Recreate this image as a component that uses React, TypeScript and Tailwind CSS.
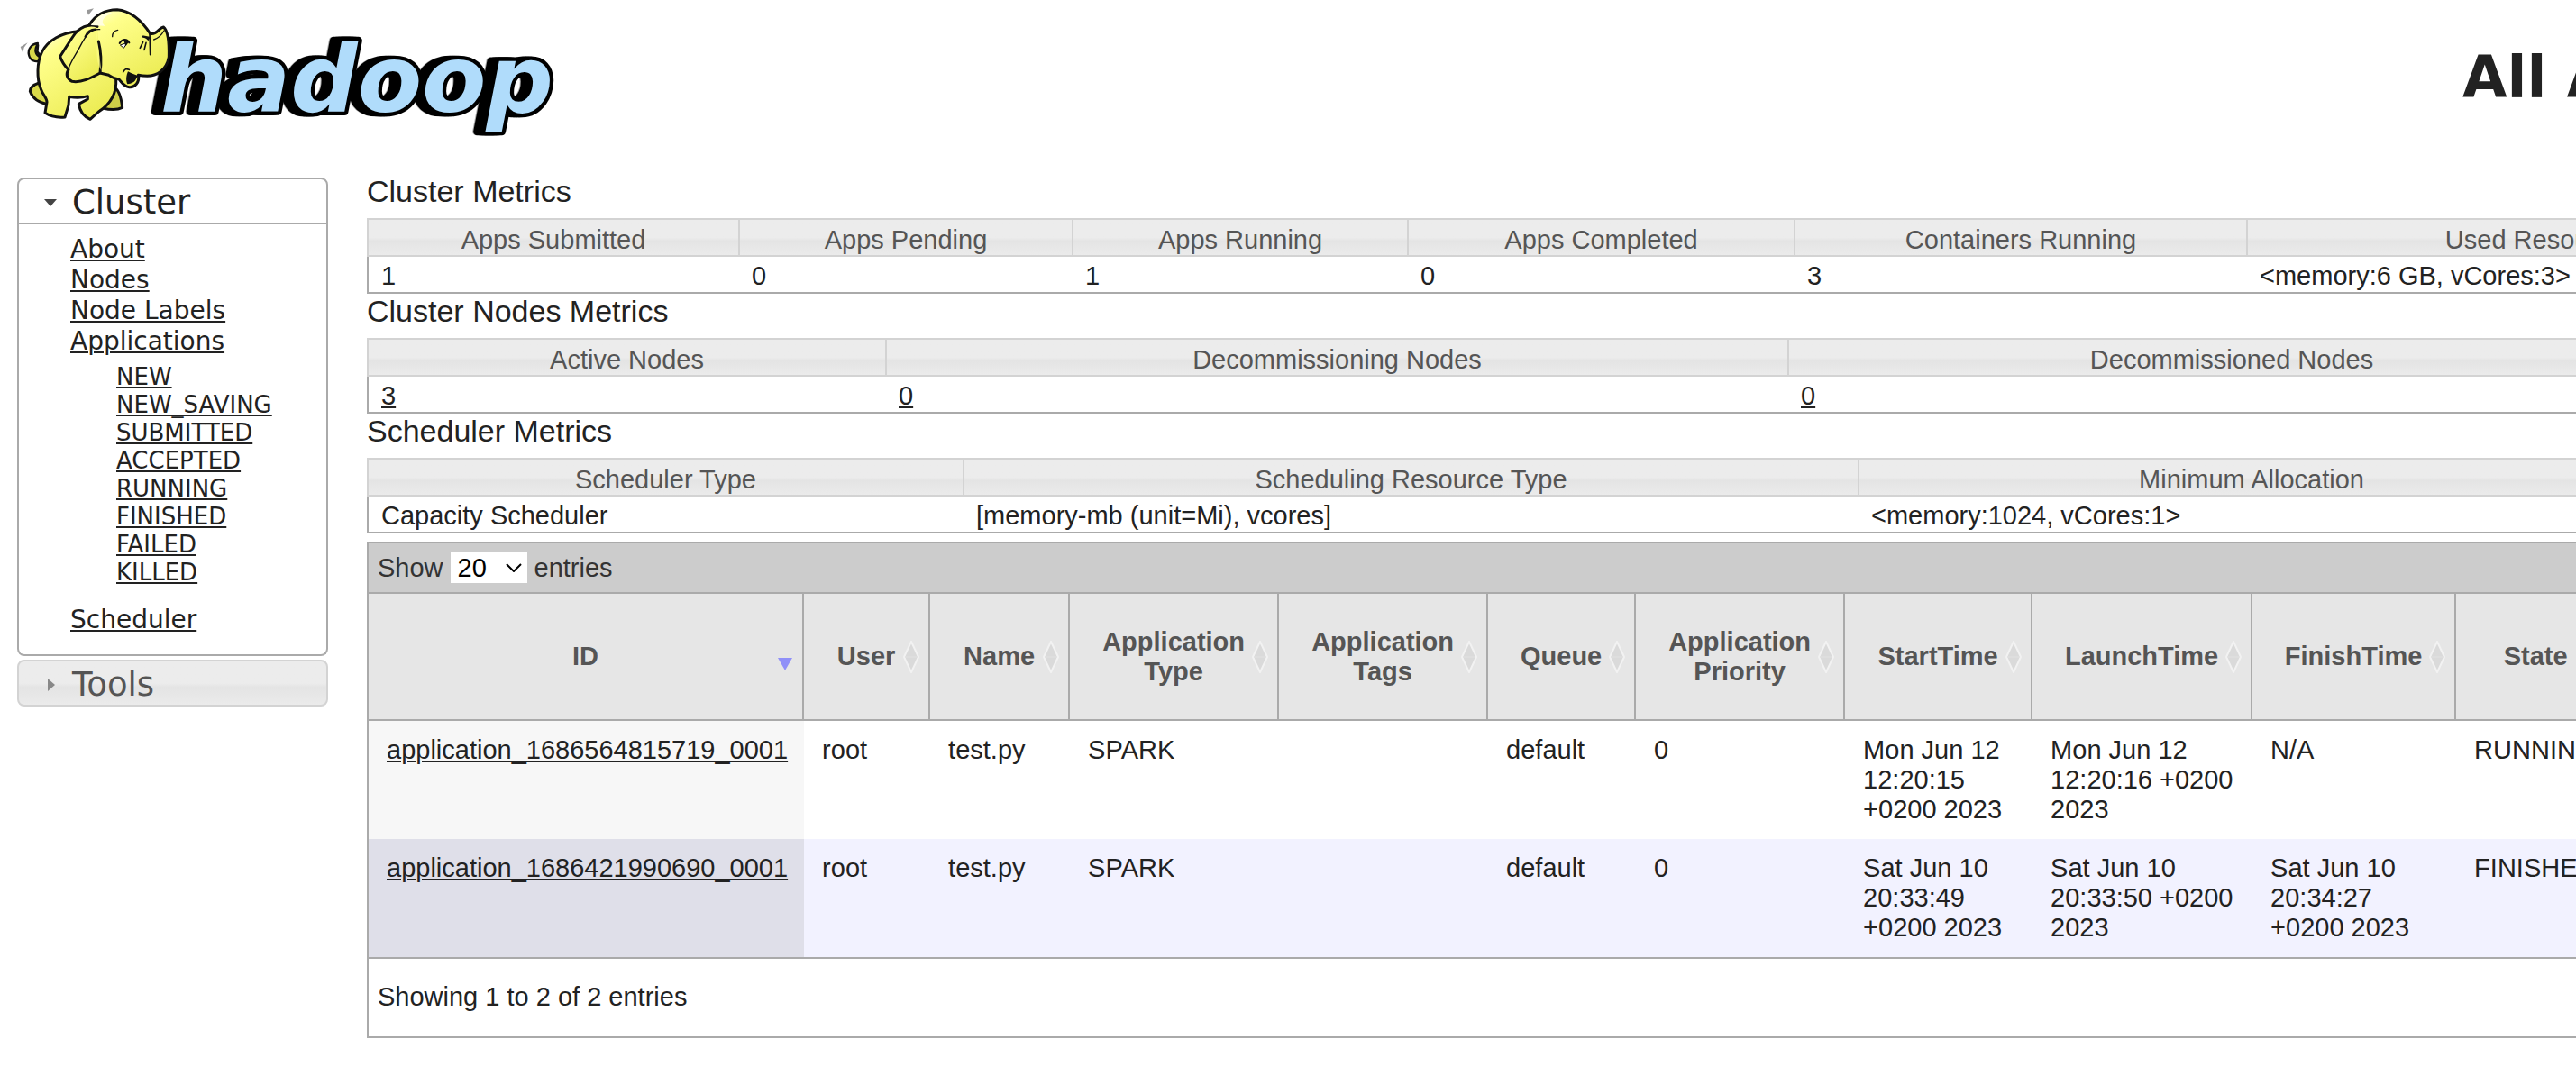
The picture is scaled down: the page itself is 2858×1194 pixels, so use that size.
import React from "react";

const appStates = ["NEW", "NEW_SAVING", "SUBMITTED", "ACCEPTED", "RUNNING", "FINISHED", "FAILED", "KILLED"];

type Column = { label: string; value: string; width: string; link?: boolean };

const clusterMetrics: Column[] = [
  { label: "Apps Submitted", value: "1", width: "w-[414px]" },
  { label: "Apps Pending", value: "0", width: "w-[370px]" },
  { label: "Apps Running", value: "1", width: "w-[372px]" },
  { label: "Apps Completed", value: "0", width: "w-[429px]" },
  { label: "Containers Running", value: "3", width: "w-[502px]" },
  { label: "Used Resources", value: "<memory:6 GB, vCores:3>", width: "w-[654px]" },
];

const nodeMetrics: Column[] = [
  { label: "Active Nodes", value: "3", width: "w-[577px]", link: true },
  { label: "Decommissioning Nodes", value: "0", width: "w-[1001px]", link: true },
  { label: "Decommissioned Nodes", value: "0", width: "w-[984px]", link: true },
];

const schedulerMetrics: Column[] = [
  { label: "Scheduler Type", value: "Capacity Scheduler", width: "w-[663px]" },
  { label: "Scheduling Resource Type", value: "[memory-mb (unit=Mi), vcores]", width: "w-[993px]" },
  { label: "Minimum Allocation", value: "<memory:1024, vCores:1>", width: "w-[872px]" },
];

const appColumns = [
  { label: "ID", width: "w-[483px]" },
  { label: "User", width: "w-[140px]" },
  { label: "Name", width: "w-[155px]" },
  { label: "Application Type", width: "w-[232px]" },
  { label: "Application Tags", width: "w-[232px]" },
  { label: "Queue", width: "w-[164px]" },
  { label: "Application Priority", width: "w-[232px]" },
  { label: "StartTime", width: "w-[208px]" },
  { label: "LaunchTime", width: "w-[244px]" },
  { label: "FinishTime", width: "w-[226px]" },
  { label: "State", width: "w-[178px]" },
];

const apps = [
  ["application_1686564815719_0001", "root", "test.py", "SPARK", "", "default", "0", "Mon Jun 12 12:20:15 +0200 2023", "Mon Jun 12 12:20:16 +0200 2023", "N/A", "RUNNING"],
  ["application_1686421990690_0001", "root", "test.py", "SPARK", "", "default", "0", "Sat Jun 10 20:33:49 +0200 2023", "Sat Jun 10 20:33:50 +0200 2023", "Sat Jun 10 20:34:27 +0200 2023", "FINISHED"],
];

const glass = "bg-linear-to-b from-[#ececec] from-50% via-[#e4e4e4] via-60% to-[#ebebeb]";
const link = "underline decoration-2 underline-offset-2";

function Logo() {
  return (
    <svg className="h-40 w-[640px] shrink-0" viewBox="0 0 1920 480" role="img" aria-label="Hadoop">
      <defs>
        <linearGradient id="hide" x1="0" y1="0" x2="0.6" y2="1">
          <stop offset="0" stopColor="#fffde0" />
          <stop offset="0.25" stopColor="#ffff8c" />
          <stop offset="1" stopColor="#ecec55" />
        </linearGradient>
      </defs>
      <text
        x="534"
        y="372"
        className='[filter:drop-shadow(-10px_0_0_#000)_drop-shadow(-18px_0_0_#000)] [paint-order:stroke] font-["DejaVu_Sans",sans-serif] text-[312px] font-bold italic'
        fill="#b0dcfb"
        stroke="#000"
        strokeWidth="26"
        strokeLinejoin="round"
      >
        hadoop
      </text>
      <g stroke="#111" strokeWidth="9" strokeLinejoin="round" strokeLinecap="round" fill="url(#hide)">
        <path d="M134 190 C118 182 112 168 126 144 C104 146 92 164 96 182 C100 202 118 208 132 202Z" fill="#d8d84a" strokeWidth="7" />
        <path d="M130 276 C112 282 100 292 100 304 C108 326 130 342 158 347 L160 300Z" fill="#d8d84a" />
        <path d="M378 290 C398 298 404 330 407 358 C388 368 366 366 342 360Z" fill="#d0d048" />
        <path d="M262 104 C205 108 160 134 140 172 C122 208 122 262 136 296 C144 318 156 326 156 340 L150 376 C168 388 192 392 216 390 L228 350 L230 322 C252 326 272 326 292 320 L292 330 L262 346 C266 372 278 388 300 397 L328 372 C362 350 390 318 386 262 L350 120Z" />
        <path d="M298 82 C316 50 350 32 390 32 C434 36 470 66 500 112 C522 118 528 92 544 90 C562 104 563 150 562 190 C554 236 520 252 490 253 C478 253 470 252 460 250 C466 274 448 292 430 290 C412 288 404 272 396 264 C380 262 370 256 362 250 L320 240Z" />
        <path d="M324 88 C296 76 262 92 244 120 C226 146 212 170 200 188 C206 206 216 220 228 232 C218 246 222 262 240 271 C272 276 302 260 333 243 C338 206 336 170 328 138" />
      </g>
      <path d="M300 96 C350 80 300 180 338 236 L318 100Z" fill="#ffff8c" opacity="0.6" />
      <path d="M302 84 C330 46 360 38 372 44 C350 52 330 70 350 86Z" fill="#fffee0" />
      <g fill="none" stroke="#111" strokeLinecap="round">
        <path d="M332 98 C300 96 284 120 268 152 C256 176 240 196 228 228" strokeWidth="4" />
        <path d="M318 98 C302 98 290 106 284 122" strokeWidth="7" />
        <path d="M392 100 C380 102 374 112 374 122" strokeWidth="4" />
        <path d="M398 144 C408 126 424 130 430 142" strokeWidth="6" />
        <path d="M474 122 L498 128 M466 160 L476 140 M480 166 L486 142 M500 182 L498 108" strokeWidth="5" />
        <path d="M512 132 C530 126 538 116 546 102" strokeWidth="4" />
        <path d="M410 240 C416 228 420 228 430 232" strokeWidth="5" />
        <path d="M126 150 L124 172 L134 186" strokeWidth="8" />
      </g>
      <path d="M400 150 L412 160 L424 142Z" fill="#fff" stroke="#111" strokeWidth="3" />
      <path d="M412 134 L430 138 L418 154Z" fill="#111" />
      <path d="M474 118 L498 122 L494 136Z" fill="#111" />
      <path d="M426 238 C440 246 452 250 460 252 C450 262 454 276 424 280 C418 268 420 252 426 238Z" fill="#111" />
      <path d="M288 34 L312 28 L294 50Z M68 156 L92 142 L80 158 L76 176Z" fill="#999" />
    </svg>
  );
}

function SortIcon({ descending }: { descending?: boolean }) {
  return (
    <svg className="absolute top-1/2 right-2.5 h-9 w-[18px] -translate-y-1/2" viewBox="0 0 18 36" aria-hidden="true">
      {descending ? (
        <path d="M1 19 H17 L9 33Z" fill="#9090f8" />
      ) : (
        <>
          <path d="M9 1 L17 18 L9 35 L1 18Z" fill="#dadada" stroke="#f2f2f2" strokeWidth="2" />
          <path d="M3 18H15" stroke="#e2e2e2" strokeWidth="1" />
        </>
      )}
    </svg>
  );
}

function MetricsSection({ title, columns }: { title: string; columns: Column[] }) {
  return (
    <section>
      <h2 className="mb-2.5 text-[34px] leading-[39px]">{title}</h2>
      <table className="w-max table-fixed border-separate border-spacing-0" aria-label={title}>
        <thead>
          <tr>
            {columns.map((c) => (
              <th key={c.label} className={`${c.width} ${glass} border-y-2 border-r-2 border-[#d3d3d3] px-3.5 pt-1.5 font-normal text-[#555] first:border-l-2`}>
                {c.label}
              </th>
            ))}
          </tr>
        </thead>
        <tbody>
          <tr>
            {columns.map((c) => (
              <td key={c.label} className="border-b-2 border-[#aaa] px-[13px] pt-[5px] pb-px first:border-l-2 first:pl-3.5">
                {c.link ? <a href="#nodes" className={link}>{c.value}</a> : c.value}
              </td>
            ))}
          </tr>
        </tbody>
      </table>
    </section>
  );
}

function Sidebar() {
  return (
    <nav className='mt-1 ml-[19px] w-[345px] shrink-0 font-["DejaVu_Sans",sans-serif]'>
      <button className="flex w-full items-center gap-[17px] rounded-t-lg border-2 border-[#aaa] bg-white pt-1 pl-7 text-[37px] leading-[44px]" aria-expanded="true">
        <svg className="h-2 w-3.5" viewBox="0 0 14 8" aria-hidden="true"><path d="M0 0H14L7 8Z" fill="#444" /></svg>
        Cluster
      </button>
      <div className="rounded-b-lg border-2 border-t-0 border-[#aaa] bg-white pt-[11px] pb-[21px] pl-[57px] text-[28px] leading-[34px]">
        <ul>
          <li><a href="#about" className={link}>About</a></li>
          <li><a href="#nodes" className={link}>Nodes</a></li>
          <li><a href="#labels" className={link}>Node Labels</a></li>
          <li>
            <a href="#apps" className={link}>Applications</a>
            <ul className="mt-[7px] mb-5 pl-[51px] text-[26px] leading-[31px]">
              {appStates.map((s) => (
                <li key={s}><a href={`#${s}`} className={link}>{s}</a></li>
              ))}
            </ul>
          </li>
          <li><a href="#scheduler" className={link}>Scheduler</a></li>
        </ul>
      </div>
      <button className={`${glass} mt-1 flex w-full items-center gap-[17px] rounded-lg border-2 border-[#d3d3d3] pt-1 pl-7 text-[37px] leading-[44px] text-[#555]`} aria-expanded="false">
        <svg className="h-3.5 w-3.5" viewBox="0 0 14 14" aria-hidden="true"><path d="M4 0L12 7L4 14Z" fill="#888" /></svg>
        Tools
      </button>
    </nav>
  );
}

function Applications() {
  return (
    <section className="mt-[9px] w-max border-2 border-[#aaa]">
      <div className="flex items-center gap-2 bg-[#ccc] px-2.5 py-[10px] text-[#333]">
        <label htmlFor="page-size">Show</label>
        <div className="relative">
          <select id="page-size" defaultValue="20" className="block h-[34px] w-[85px] appearance-none bg-white pl-2 leading-[33px] text-black">
            <option>20</option>
            <option>40</option>
            <option>60</option>
            <option>80</option>
            <option>100</option>
          </select>
          <svg className="pointer-events-none absolute top-3 right-1.5 h-2.5 w-[18px]" viewBox="0 0 18 10" fill="none" stroke="#000" strokeWidth="2" aria-hidden="true">
            <path d="M1 1L9 9L17 1" />
          </svg>
        </div>
        <span>entries</span>
      </div>
      <table className="table-fixed border-separate border-spacing-0 border-y-2 border-[#aaa]" aria-label="Applications">
        <thead>
          <tr>
            {appColumns.map((c, i) => (
              <th key={c.label} aria-sort={i === 0 ? "descending" : "none"} className={`${c.width} relative h-[141px] border-r-2 border-b-2 border-[#aaa] bg-[#e6e6e6] px-8 font-bold text-[#555]`}>
                {c.label}
                <SortIcon descending={i === 0} />
              </th>
            ))}
          </tr>
        </thead>
        <tbody>
          {apps.map((row) => (
            <tr key={row[0]} className="group even:bg-[#f2f2ff]">
              {row.map((cell, i) => (
                <td key={i} className="py-4 pr-[18px] pl-5 align-top first:bg-[#f7f7f7] group-even:first:bg-[#dfdfe9]">
                  {i === 0 ? <a href={`#${cell}`} className={link}>{cell}</a> : cell}
                </td>
              ))}
            </tr>
          ))}
        </tbody>
      </table>
      <p className="px-2.5 pt-[26px] pb-[27px]">Showing 1 to 2 of 2 entries</p>
    </section>
  );
}

export default function App() {
  return (
    <div className='min-h-screen overflow-x-hidden bg-white font-["Liberation_Sans",Arial,sans-serif] text-[29px] leading-[33px] text-[#222]'>
      <div className="min-w-[3294px]">
        <header className="flex items-start justify-between pb-[33px]">
          <Logo />
          <h1 className='pt-[49px] font-["DejaVu_Sans",sans-serif] text-[64px] leading-[74px] font-bold whitespace-nowrap'>All Applications</h1>
        </header>
        <div className="flex items-start gap-[43px]">
          <Sidebar />
          <main>
            <MetricsSection title="Cluster Metrics" columns={clusterMetrics} />
            <MetricsSection title="Cluster Nodes Metrics" columns={nodeMetrics} />
            <MetricsSection title="Scheduler Metrics" columns={schedulerMetrics} />
            <Applications />
          </main>
        </div>
      </div>
    </div>
  );
}
